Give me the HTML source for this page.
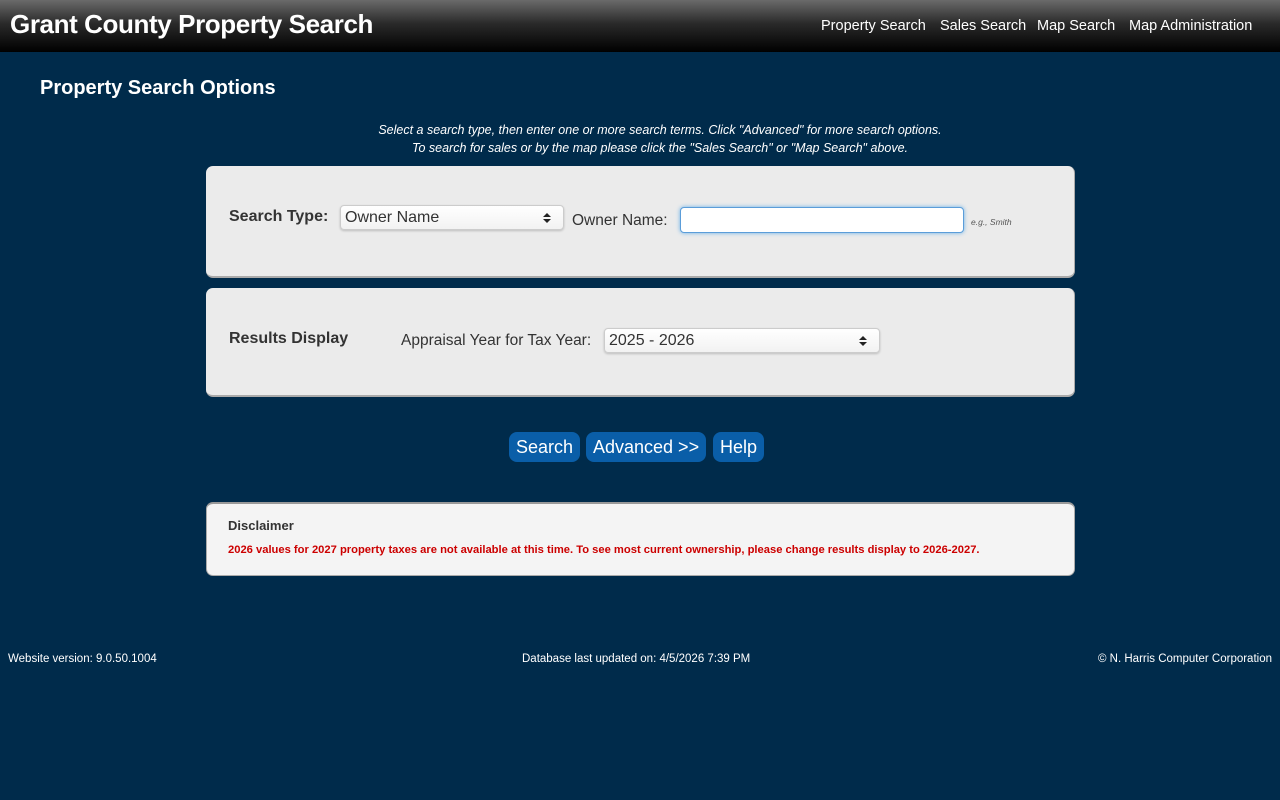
<!DOCTYPE html>
<html><head><meta charset="utf-8"><style>
*{box-sizing:border-box}
body{margin:0;width:1280px;height:800px;background:#002b4b;font-family:"Liberation Sans",sans-serif;color:#333;position:relative;overflow:hidden}
.hdr{position:absolute;left:0;top:0;width:1280px;height:52px;background:linear-gradient(#6a6a6a,#2a2a2a 45%,#000);}
.hdr h1{position:absolute;left:10px;top:9px;margin:0;font-size:26px;color:#fff;font-weight:bold;letter-spacing:-0.4px}
.nav{position:absolute;top:18px;font-size:14.5px;color:#fff}
.t{position:absolute;color:#fff}
.panel{position:absolute;left:206px;width:869px;background:#ebebeb;border-radius:7px;border-bottom:2px solid #aaa;border-right:1px solid #aaa}
.sel{position:absolute;height:25px;background:linear-gradient(#fff,#f2f2f2);border:1px solid #ccc;border-radius:4px;box-shadow:0 1px 2px rgba(0,0,0,.2);font-size:16px;color:#333;padding:3px 4px}
.sel:after{content:"";position:absolute;right:12px;top:7px;border:4px solid transparent;border-bottom:4px solid #222;border-top:none}
.sel:before{content:"";position:absolute;right:12px;top:13px;border:4px solid transparent;border-top:4px solid #222;border-bottom:none}
.btn{position:absolute;top:432px;height:30px;background:#0a5ea8;border-radius:8px;color:#fff;font-size:18px;padding:5px 7px}
</style></head><body>
<div class="hdr"><h1>Grant County Property Search</h1>
<span class="nav" style="left:821px">Property Search</span>
<span class="nav" style="left:940px">Sales Search</span>
<span class="nav" style="left:1037px">Map Search</span>
<span class="nav" style="left:1129px">Map Administration</span></div>
<div class="t" style="left:40px;top:77px;font-size:20px;font-weight:bold">Property Search Options</div>
<div class="t" style="left:0;width:1320px;text-align:center;top:121px;font-size:12.5px;font-style:italic;line-height:18px">Select a search type, then enter one or more search terms. Click "Advanced" for more search options.<br>To search for sales or by the map please click the "Sales Search" or "Map Search" above.</div>
<div class="panel" style="top:166px;height:112px">
<div style="position:absolute;left:23px;top:42px;font-size:16px;font-weight:bold">Search Type:</div>
<div class="sel" style="left:134px;top:39px;width:224px">Owner Name</div>
<div style="position:absolute;left:366px;top:46px;font-size:15.5px">Owner Name:</div>
<div style="position:absolute;left:474px;top:41px;width:284px;height:26px;background:#fff;border:1px solid #5b9dd9;border-radius:4px;box-shadow:0 0 4px #66afe9"></div>
<div style="position:absolute;left:765px;top:51px;font-size:8.5px;font-style:italic;color:#555">e.g., Smith</div>
</div>
<div class="panel" style="top:288px;height:109px">
<div style="position:absolute;left:23px;top:42px;font-size:16px;font-weight:bold">Results Display</div>
<div style="position:absolute;left:195px;top:44px;font-size:15.5px">Appraisal Year for Tax Year:</div>
<div class="sel" style="left:398px;top:40px;width:276px">2025 - 2026</div>
</div>
<div class="btn" style="left:509px">Search</div>
<div class="btn" style="left:586px">Advanced &gt;&gt;</div>
<div class="btn" style="left:713px">Help</div>
<div class="panel" style="top:502px;height:74px;background:#f4f4f4;border:1px solid #aaa;border-top:2px solid #999">
<div style="position:absolute;left:21px;top:14px;font-size:13px;font-weight:bold">Disclaimer</div>
<div style="position:absolute;left:21px;top:40px;font-size:11.2px;font-weight:bold;color:#c00">2026 values for 2027 property taxes are not available at this time. To see most current ownership, please change results display to 2026-2027.</div>
</div>
<div class="t" style="left:8px;top:653px;font-size:11.5px">Website version: 9.0.50.1004</div>
<div class="t" style="left:522px;top:653px;font-size:11.5px">Database last updated on: 4/5/2026 7:39 PM</div>
<div class="t" style="right:8px;top:653px;font-size:11.5px">© N. Harris Computer Corporation</div>
</body></html>
